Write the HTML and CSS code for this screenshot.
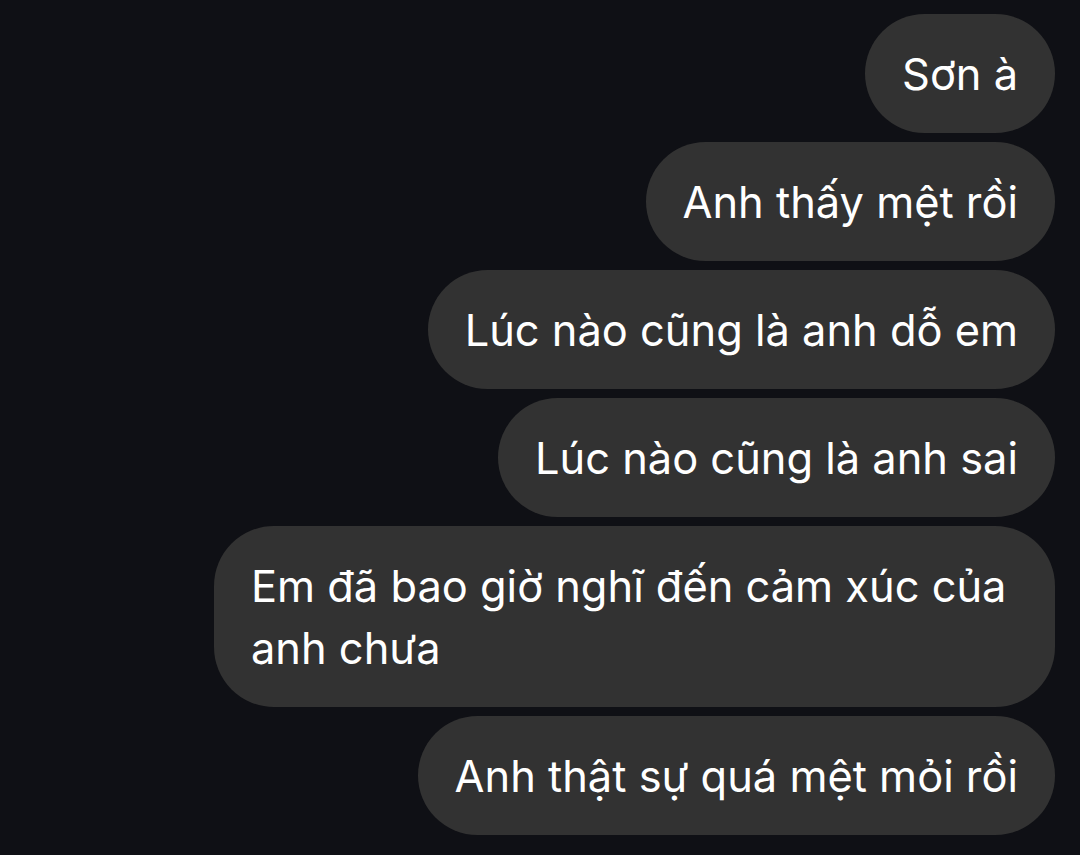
FILE: index.html
```html
<!DOCTYPE html>
<html lang="vi">
<head>
<meta charset="utf-8">
<link rel="stylesheet" href="styles.css">
</head>
<body>
<div class="chat">
  <div class="bubble">Sơn à</div>
  <div class="bubble">Anh thấy mệt rồi</div>
  <div class="bubble">Lúc nào cũng là anh dỗ em</div>
  <div class="bubble">Lúc nào cũng là anh sai</div>
  <div class="bubble">Em đã bao giờ nghĩ đến cảm xúc của anh chưa</div>
  <div class="bubble">Anh thật sự quá mệt mỏi rồi</div>
</div>
</body>
</html>
```
FILE: styles.css
```css
html, body {
  margin: 0;
  padding: 0;
  background: #0f1015;
  height: 100%;
}
.chat {
  display: flex;
  flex-direction: column;
  align-items: flex-end;
  gap: 9px;
  padding: 14px 25px 0 0;
}
.bubble {
  background: #323232;
  color: #ffffff;
  font-family: "Inter", "Roboto", sans-serif;
  font-size: 43.4px;
  line-height: 62px;
  padding: 28.5px 37px;
  border-radius: 60px;
  max-width: 767px;
}
```
